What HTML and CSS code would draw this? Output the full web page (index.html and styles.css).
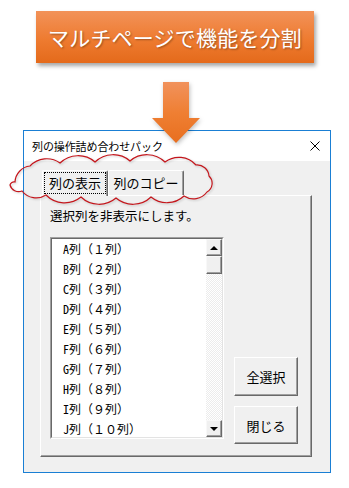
FILE: index.html
```html
<!DOCTYPE html>
<html lang="ja">

<head>
    <meta charset="UTF-8">
    <title>列の操作詰め合わせパック</title>
    <link rel="stylesheet" href="styles.css">
</head>

<body>
    <div class="banner">マルチページで機能を分割</div>

    <svg class="arrow" width="50" height="62" viewBox="0 0 50 62">
        <defs>
            <linearGradient id="arrow-grad" x1="0" y1="0" x2="0" y2="1">
                <stop offset="0" stop-color="#f1925c" />
                <stop offset="0.5" stop-color="#ef7f33" />
                <stop offset="1" stop-color="#e86f1f" />
            </linearGradient>
        </defs>
        <path d="M12 0 H38 V36 H49 L25 61 L1 36 H12 Z" fill="url(#arrow-grad)" />
    </svg>

    <div class="dialog">
        <div class="titlebar">
            <span class="title">列の操作詰め合わせパック</span>
            <svg class="close" width="10" height="10" viewBox="0 0 10 10">
                <path d="M0.5 0.5 L9.5 9.5 M9.5 0.5 L0.5 9.5" stroke="#000" stroke-width="1" />
            </svg>
        </div>

        <div class="dlg-body">
            <div class="tabs">
                <div class="tab active"><span class="focus">列の表示</span></div>
                <div class="tab">列のコピー</div>
            </div>

            <div class="panel">
                <p class="hint">選択列を非表示にします。</p>
                <div class="row">
                    <div class="listbox">
                        <div class="list-inner">
                            <ul class="items">
                                <li><span class="col">A</span>列（１列）</li>
                                <li><span class="col">B</span>列（２列）</li>
                                <li><span class="col">C</span>列（３列）</li>
                                <li><span class="col">D</span>列（４列）</li>
                                <li><span class="col">E</span>列（５列）</li>
                                <li><span class="col">F</span>列（６列）</li>
                                <li><span class="col">G</span>列（７列）</li>
                                <li><span class="col">H</span>列（８列）</li>
                                <li><span class="col">I</span>列（９列）</li>
                                <li><span class="col">J</span>列（１０列）</li>
                            </ul>
                            <div class="scrollbar">
                                <div class="sb-btn"><span class="tri up"></span></div>
                                <div class="sb-thumb"></div>
                                <div class="sb-track"></div>
                                <div class="sb-btn"><span class="tri down"></span></div>
                            </div>
                        </div>
                    </div>
                    <div class="buttons">
                        <button class="btn select-all">全選択</button>
                        <button class="btn">閉じる</button>
                    </div>
                </div>
            </div>
        </div>

        <!-- 吹き出し（雲） -->
        <svg class="cloud" width="208" height="54" viewBox="0 0 208 54">
            <path d="M7 28 A17 17 0 0 1 22 12 A23 23 0 0 1 52 9 A26 26 0 0 1 87 8 A26 26 0 0 1 122 7
                     A26 26 0 0 1 157 8 A23 23 0 0 1 188 11 A12 12 0 0 1 201 22 A10 10 0 0 1 199 38
                     A17 17 0 0 1 176 42 A25 25 0 0 1 143 43 A26 26 0 0 1 108 44 A26 26 0 0 1 73 43
                     A26 26 0 0 1 38 41 A18 18 0 0 1 14 37 A9 9 0 0 1 2 31 A4 4 0 0 1 7 28 Z"
                fill="none" stroke="#c4161c" stroke-width="1.2" />
        </svg>
    </div>
</body>

</html>
```

FILE: styles.css
```css
body {
    margin: 0;
    width: 349px;
    height: 488px;
    overflow: hidden;
    background-color: #fff;
    font-family: "Noto Sans CJK JP", sans-serif;
    color: #000;
}

.banner {
    margin: 11px 0 0 36px;
    width: 278px;
    height: 52px;
    line-height: 52px;
    text-align: center;
    font-size: 21px;
    letter-spacing: 0.2px;
    color: #fff;
    background: linear-gradient(#f29259, #ee7b30 55%, #e46a1b);
    box-shadow: 2px 3px 4px rgba(0, 0, 0, 0.35);
    text-shadow: 1px 1px 2px rgba(0, 0, 0, 0.35);
}

.arrow {
    display: block;
    position: relative;
    z-index: 2;
    margin: 19px 0 -14px 151px;
    filter: drop-shadow(1px 2px 2px rgba(0, 0, 0, 0.25));
}

.dialog {
    position: relative;
    margin-left: 23px;
    width: 308px;
    height: 343px;
    box-sizing: border-box;
    border: 1px solid #1a7fd4;
    background-color: #f0f0f0;
}

.titlebar {
    display: flex;
    justify-content: space-between;
    align-items: center;
    height: 30px;
    padding: 0 10px 0 8px;
    background-color: #fff;
}

.title {
    font-size: 11px;
    letter-spacing: -0.1px;
}

.dlg-body {
    padding: 9px 18px 15px 16px;
}

.tabs {
    display: flex;
    margin-left: 2px;
    height: 25px;
}

.tab {
    box-sizing: border-box;
    height: 25px;
    width: 76px;
    border: 1px solid;
    border-color: #fff #696969 transparent #fff;
    border-bottom: none;
    border-radius: 2px 2px 0 0;
    box-shadow: inset -1px 0 0 #a0a0a0;
    font-size: 13px;
    line-height: 23px;
    text-align: center;
}

.tab.active {
    position: relative;
    z-index: 1;
    width: 66px;
    height: 26px;
    background-color: #f0f0f0;
}

.focus {
    display: block;
    box-sizing: border-box;
    width: 62px;
    height: 22px;
    margin: 1px 0 0 1px;
    border: 1px dotted #000;
    line-height: 20px;
}

.panel {
    box-sizing: border-box;
    padding: 0 12px 12px 9px;
    border: 1px solid;
    border-color: #fff #696969 #696969 #fff;
    box-shadow: inset -1px -1px 0 #a0a0a0;
}

.hint {
    margin: 11px 0 12px;
    font-size: 12.5px;
    line-height: 18px;
}

.row {
    display: flex;
    align-items: flex-end;
}

.listbox {
    box-sizing: border-box;
    width: 174px;
    height: 202px;
    margin-bottom: 5px;
    border: 1px solid;
    border-color: #a0a0a0 #fff #fff #a0a0a0;
}

.list-inner {
    display: flex;
    height: 100%;
    box-sizing: border-box;
    border: 1px solid;
    border-color: #696969 #e3e3e3 #e3e3e3 #696969;
    background-color: #fff;
}

.items {
    flex: 1;
    margin: 0;
    padding: 0 0 0 11px;
    list-style: none;
    font-size: 12px;
    line-height: 20px;
    overflow: hidden;
}

.col {
    font-feature-settings: "hwid";
}

.scrollbar {
    display: flex;
    flex-direction: column;
    width: 16px;
}

.sb-btn,
.sb-thumb {
    display: flex;
    align-items: center;
    justify-content: center;
    box-sizing: border-box;
    height: 17px;
    border: 1px solid;
    border-color: #f8f8f8 #696969 #696969 #f8f8f8;
    box-shadow: inset -1px -1px 0 #a0a0a0;
    background-color: #f0f0f0;
}

.sb-thumb {
    height: 18px;
}

.sb-track {
    flex: 1;
    background: repeating-conic-gradient(#ececec 0 25%, #fff 0 50%) 0 0 / 2px 2px;
}

.tri {
    width: 0;
    height: 0;
    border-left: 4px solid transparent;
    border-right: 4px solid transparent;
}

.tri.up {
    border-bottom: 4px solid #000;
}

.tri.down {
    border-top: 4px solid #000;
}

.buttons {
    display: flex;
    flex-direction: column;
    gap: 10px;
    margin-left: 10px;
}

.btn {
    box-sizing: border-box;
    width: 64px;
    height: 38px;
    padding: 0;
    border: 1px solid;
    border-color: #fff #696969 #696969 #fff;
    box-shadow: inset -1px -1px 0 #a0a0a0;
    background-color: #f0f0f0;
    font-family: "Noto Sans CJK JP", sans-serif;
    font-size: 13px;
    color: #000;
}

.btn.select-all {
    height: 39px;
}

.cloud {
    position: absolute;
    left: -16px;
    top: 23px;
    z-index: 3;
    filter: drop-shadow(1px 1px 1px rgba(0, 0, 0, 0.2));
}
```
